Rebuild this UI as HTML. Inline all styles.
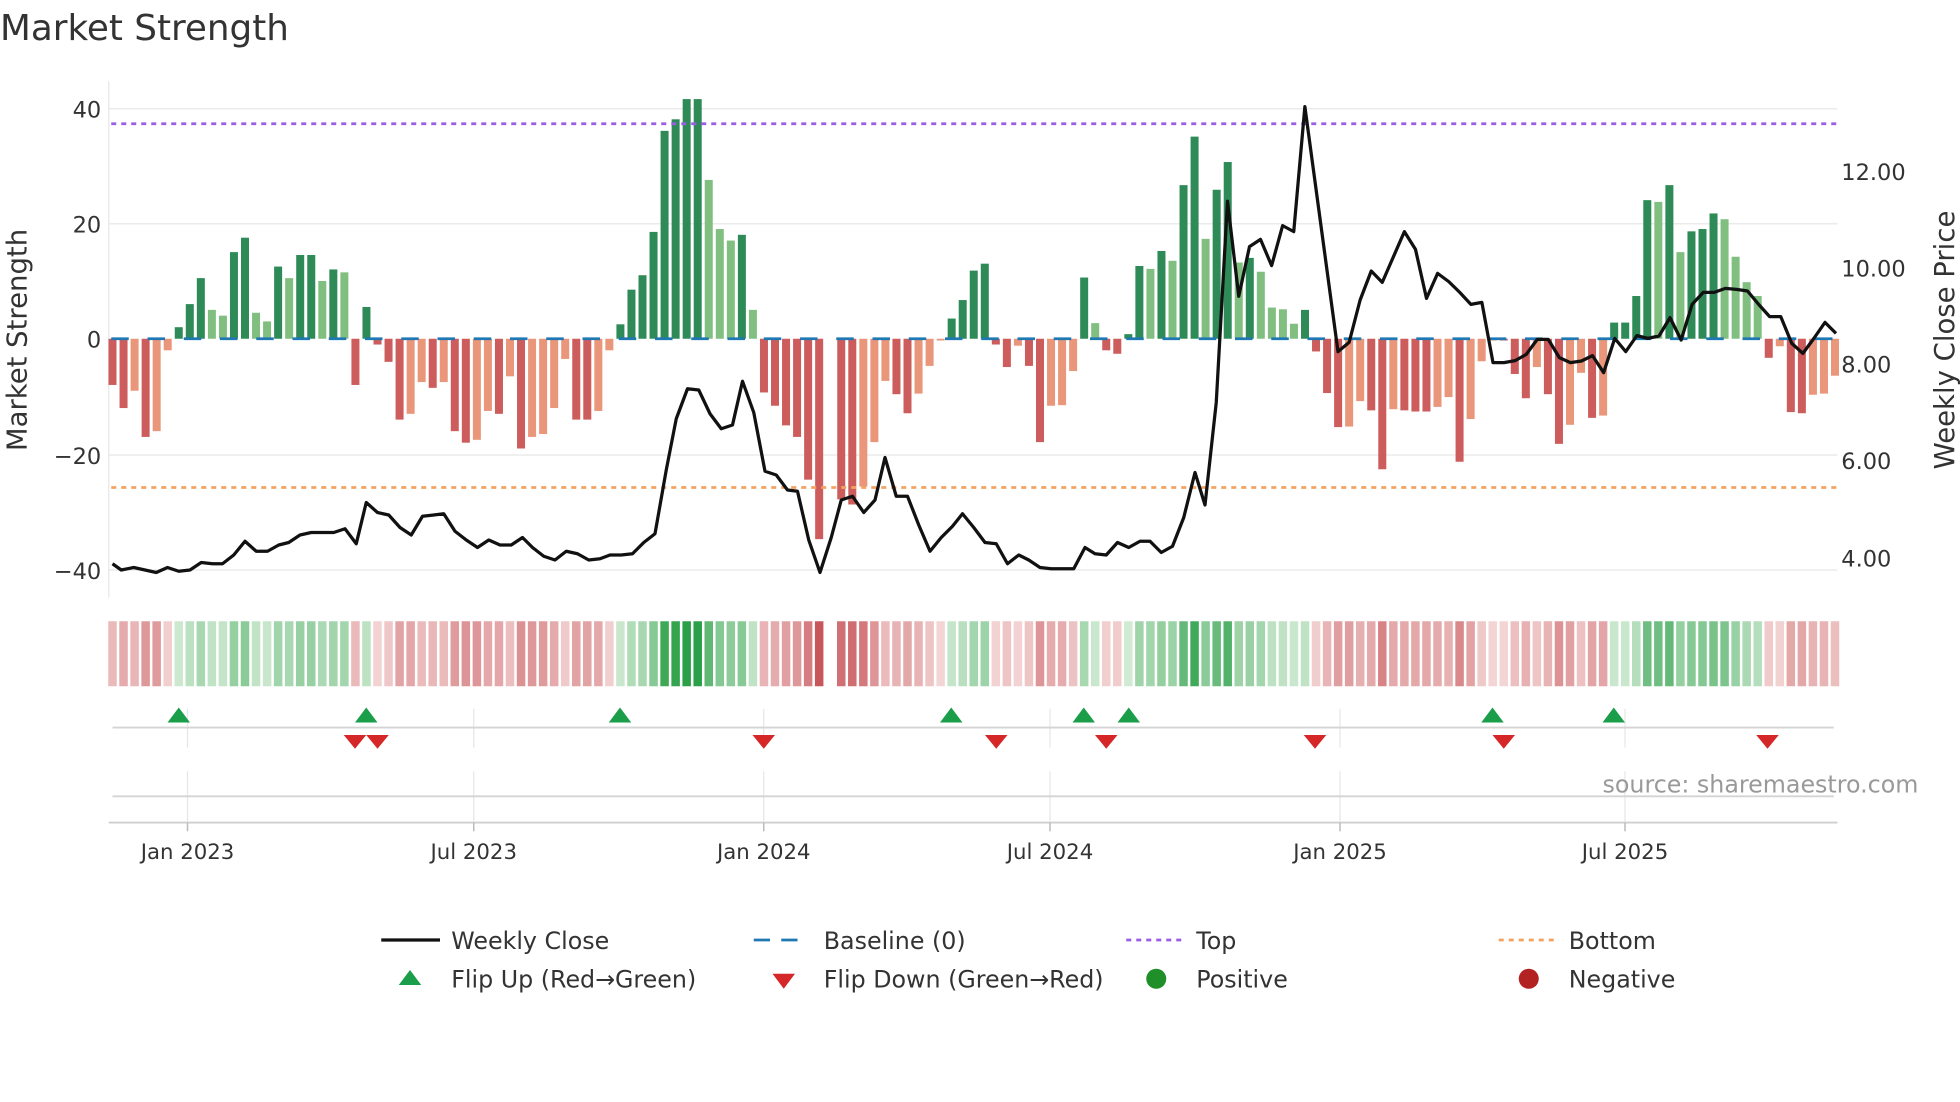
<!DOCTYPE html>
<html><head><meta charset="utf-8">
<style>
html,body{margin:0;padding:0;background:#fff;}
svg{display:block;}
text{font-family:"DejaVu Sans","Liberation Sans",sans-serif;fill:#333;}
</style></head>
<body>
<svg id="s" width="1960" height="1102" viewBox="0 0 1568 881.6" xmlns="http://www.w3.org/2000/svg">
<text x="0" y="32" font-size="28.6">Market Strength</text>
<g id="grid" stroke="#ebebeb" stroke-width="1.2">
<line x1="87" x2="1470" y1="87" y2="87"/>
<line x1="87" x2="1470" y1="179" y2="179"/>
<line x1="87" x2="1470" y1="364" y2="364"/>
<line x1="87" x2="1470" y1="456" y2="456"/>
<line x1="87" x2="87" y1="65" y2="478"/>
</g>
<g font-size="18" text-anchor="end">
<text x="81" y="94">40</text>
<text x="81" y="186">20</text>
<text x="81" y="278">0</text>
<text x="81" y="371">−20</text>
<text x="81" y="463">−40</text>
</g>
<g font-size="18">
<text x="1473" y="144">12.00</text>
<text x="1473" y="221">10.00</text>
<text x="1473" y="298">8.00</text>
<text x="1473" y="375">6.00</text>
<text x="1473" y="453">4.00</text>
</g>
<text font-size="22" transform="translate(21,272) rotate(-90)" text-anchor="middle">Market Strength</text>
<text font-size="22" transform="translate(1563,272) rotate(-90)" text-anchor="middle">Weekly Close Price</text>
<g id="bars"></g>
<line x1="89" x2="1470" y1="271" y2="271" stroke="#1f77b4" stroke-width="2.2" stroke-dasharray="14 15"/>
<line x1="89" x2="1470" y1="99" y2="99" stroke="#9b5de5" stroke-width="2.2" stroke-dasharray="4 4"/>
<line x1="89" x2="1470" y1="390" y2="390" stroke="#f4a261" stroke-width="2.2" stroke-dasharray="4 4"/>
<polyline id="price" fill="none" stroke="#111" stroke-width="2.6" stroke-linejoin="round"/>
<g id="heat"></g>
<g stroke="#e6e6e6" stroke-width="1">
<line x1="150" x2="150" y1="567" y2="598"/><line x1="379" x2="379" y1="567" y2="598"/><line x1="611" x2="611" y1="567" y2="598"/><line x1="840" x2="840" y1="567" y2="598"/><line x1="1072" x2="1072" y1="567" y2="598"/><line x1="1300" x2="1300" y1="567" y2="598"/>
<line x1="150" x2="150" y1="617" y2="657"/><line x1="379" x2="379" y1="617" y2="657"/><line x1="611" x2="611" y1="617" y2="657"/><line x1="840" x2="840" y1="617" y2="657"/><line x1="1072" x2="1072" y1="617" y2="657"/><line x1="1300" x2="1300" y1="617" y2="657"/>
</g>
<line x1="90" x2="1467" y1="582" y2="582" stroke="#d4d4d4" stroke-width="1.5"/>
<line x1="90" x2="1467" y1="637" y2="637" stroke="#d4d4d4" stroke-width="1.5"/>
<line x1="87" x2="1470" y1="658" y2="658" stroke="#cfcfcf" stroke-width="1.5"/>
<g stroke="#bbb" stroke-width="1.2">
<line x1="150" x2="150" y1="658" y2="665"/><line x1="379" x2="379" y1="658" y2="665"/><line x1="611" x2="611" y1="658" y2="665"/><line x1="840" x2="840" y1="658" y2="665"/><line x1="1072" x2="1072" y1="658" y2="665"/><line x1="1300" x2="1300" y1="658" y2="665"/>
</g>
<g id="marks"></g>
<text x="1282" y="634" font-size="19" style="fill:#999">source: sharemaestro.com</text>
<g font-size="17" text-anchor="middle">
<text x="150" y="687">Jan 2023</text><text x="379" y="687">Jul 2023</text><text x="611" y="687">Jan 2024</text><text x="840" y="687">Jul 2024</text><text x="1072" y="687">Jan 2025</text><text x="1300" y="687">Jul 2025</text>
</g>
<g font-size="19">
<line x1="305" x2="352" y1="752" y2="752" stroke="#111" stroke-width="2.6"/>
<text x="361" y="759">Weekly Close</text>
<line x1="603" x2="647" y1="752" y2="752" stroke="#1f77b4" stroke-width="2.2" stroke-dasharray="13 9"/>
<text x="659" y="759">Baseline (0)</text>
<line x1="901" x2="945" y1="752" y2="752" stroke="#9b5de5" stroke-width="2.2" stroke-dasharray="4 4"/>
<text x="957" y="759">Top</text>
<line x1="1199" x2="1243" y1="752" y2="752" stroke="#f4a261" stroke-width="2.2" stroke-dasharray="4 4"/>
<text x="1255" y="759">Bottom</text>
<polygon points="319,788 337,788 328,776" fill="#1a9e4a"/>
<text x="361" y="790">Flip Up (Red→Green)</text>
<polygon points="618,779 636,779 627,791" fill="#d62728"/>
<text x="659" y="790">Flip Down (Green→Red)</text>
<circle cx="925" cy="783" r="8" fill="#1f8f2a"/>
<text x="957" y="790">Positive</text>
<circle cx="1223" cy="783" r="8" fill="#b22222"/>
<text x="1255" y="790">Negative</text>
</g>
</svg>
<script>
var A=[-8,-12,-9,-17,-16,-2,2,6,10.5,5,4,15,17.5,4.5,3,12.5,10.5,14.5,14.5,10,12,11.5,-8,5.5,-1,-4,-14,-13,-7.5,-8.5,-7.5,-16,-18,-17.5,-12.5,-13,-6.5,-19,-17,-16.5,-12,-3.5,-14,-14,-12.5,-2,2.5,8.5,11,18.5,36,38,41.5,41.5,27.5,19,17,18,5,
-9.3,-11.6,-15,-17,-24.4,-34.7,null,-27.8,-28.7,-25.6,-17.9,-7.3,-9.6,-12.9,-9.5,-4.7,-0.3,3.5,6.7,11.8,13,-1,-4.9,-1.2,-4.7,-17.9,-11.6,-11.5,-5.6,10.6,2.7,-2,-2.6,0.8,12.6,12.1,15.2,13.5,26.6,35,17.3,25.8,30.6,13.2,
14,11.6,5.4,5.1,2.6,5,-2.2,-9.4,-15.3,-15.2,-10.8,-12.4,-22.6,-12.2,-12.4,-12.6,-12.6,-11.8,-10.1,-21.3,-13.9,-3.9,-0.3,-0.3,-6.1,-10.3,-4.9,-9.6,-18.2,-14.9,-5.9,-13.7,-13.3,2.8,2.8,7.4,24,23.7,26.6,15,18.6,19,21.7,20.7,14.2,9.8,7.4,-3.3,-1.3,-12.7,-12.9,-9.7,-9.5,-6.4];
var NS="http://www.w3.org/2000/svg";
function el(t,a,p){var e=document.createElementNS(NS,t);for(var k in a)e.setAttribute(k,a[k]);p.appendChild(e);return e;}
function mix(c1,c2,t){t=Math.max(0,Math.min(1,t));var r=[];for(var i=0;i<3;i++)r.push(Math.round(c1[i]+(c2[i]-c1[i])*t));return "rgb("+r.join(",")+")";}
var bars=document.getElementById("bars"),heat=document.getElementById("heat");
var step=(1468-90)/156,prev=0;
for(var i=0;i<A.length;i++){
 var v=A[i],x=90+i*step;
 if(v===null){prev=0;continue;}
 var h=Math.abs(v)*4.62,col;
 if(v>=0){col=(v>=prev)?"#2e8b57":"#80bf80";el("rect",{x:x-3.2,y:271-h,width:6.4,height:h,fill:col},bars);}
 else{col=(v<=prev)?"#cd5c5c":"#e9967a";el("rect",{x:x-3.2,y:271,width:6.4,height:h,fill:col},bars);}
 prev=v;
 var hc=v>=0?mix([212,236,214],[44,160,72],v/40):mix([244,214,214],[200,86,90],-v/35);
 el("rect",{x:x-3.4,y:497,width:6.8,height:52,fill:hc},heat);
}
var P=[[90,451],[97,456],[107,454],[116,456],[125,458],[134,454],[143,457],[152,456],[161,450],[170,451],[178,451],[187,444],[196,433],[205,441],[214,441],[223,436],[231,434],[240,428],[249,426],[258,426],[267,426],[276,423],[285,435],[293,402],[302,410],[311,412],[320,422],[329,428],[338,413],[347,412],[355,411],[364,425],[373,432],[382,438],[391,432],[400,436],[409,436],[418,430],[426,438],[435,445],[444,448],[453,441],[462,443],[471,448],[480,447],[488,444],[497,444],[506,443],[515,434],[524,427],[533,376],[541,335],[550,311],[559,312],[568,331],[577,343],[586,340],[594,305],[603,330],[612,377],[621,380],[630,392],[638,393],[647,432],[656,458],[665,430],[673,400],[682,397],[691,410],[700,400],[708,366],[717,397],[726,397],[735,420],[744,441],[753,430],[762,421],[770,411],[779,422],[788,434],[797,435],[806,451],[815,444],[823,448],[832,454],[841,455],[850,455],[859,455],[868,438],[876,443],[885,444],[894,434],[903,438],[912,433],[920,433],[929,442],[938,437],[947,414],[956,378],[964,404],[973,322],[982,161],[991,237],[999.6,197.3],[1008.4,191.5],[1017.3,212.5],[1026.1,180.5],[1035,185.3],[1043.9,85.3],[1070.4,281.3],[1079.3,273.9],[1088.1,240],[1097,216.8],[1105.8,225.9],[1123.5,185.3],[1132.4,199.5],[1141.2,238.7],[1150.1,218.7],[1159,225.3],[1167.8,233.9],[1176.7,243.5],[1185.5,241.9],[1194.4,290.1],[1203.2,290.1],[1212.1,288.5],[1221,283.5],[1229.8,271.5],[1238.6,271.5],[1247.5,286.1],[1256.3,290.1],[1265.2,288.8],[1274,284.5],[1282.9,298.1],[1291.8,270.7],[1300.6,281.3],[1309.5,268.5],[1318.3,270.7],[1327.2,268.8],[1336,254.1],[1344.9,272],[1353.7,243.5],[1362.6,233.9],[1371.4,233.9],[1380.3,230.7],[1389.2,231.5],[1398,232.8],[1406.9,243.5],[1415.7,253.3],[1424.6,253.3],[1433.4,274.7],[1442.3,282.7],[1451.1,270.7],[1460,257.9],[1468.8,266.7]];
document.getElementById("price").setAttribute("points",P.map(function(p){return p.join(",")}).join(" "));
var marks=document.getElementById("marks");
[143,293,496,761,867,903,1194,1291].forEach(function(x){el("polygon",{points:(x-9)+",578 "+(x+9)+",578 "+x+",566",fill:"#1a9e4a"},marks);});
[284,302,611,797,885,1052,1203,1414].forEach(function(x){el("polygon",{points:(x-9)+",588 "+(x+9)+",588 "+x+",599",fill:"#d62728"},marks);});
</script>
</body></html>
